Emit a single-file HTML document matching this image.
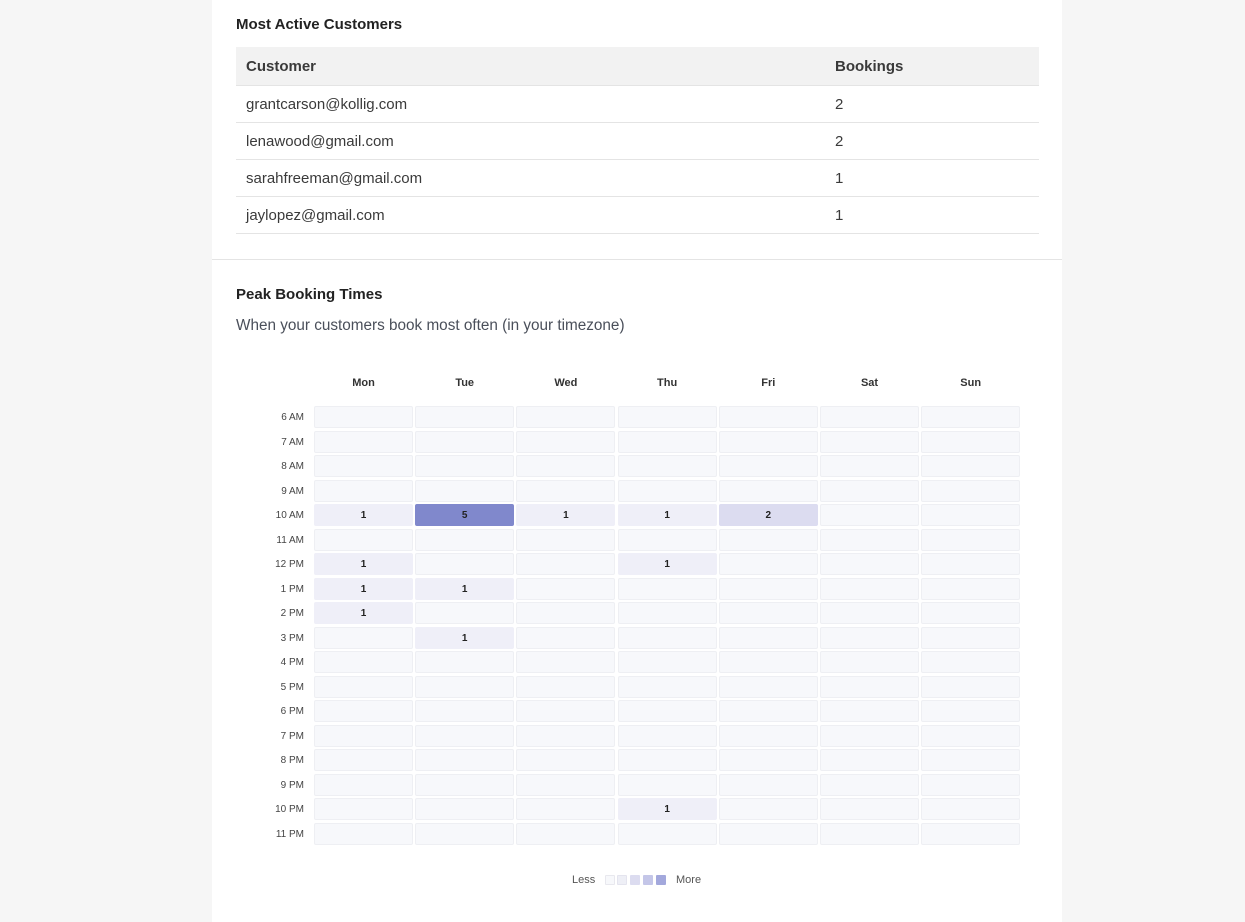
<!DOCTYPE html>
<html><head><style>
body{margin:0;background:#f6f6f6;font-family:"Liberation Sans",sans-serif;color:#333}
.card{position:absolute;left:212px;top:0;width:850px;height:922px;background:#fff}
h3{position:absolute;left:24px;margin:0;font-size:15px;font-weight:bold;color:#222}
table{position:absolute;left:24px;top:47px;width:803px;border-collapse:collapse;font-size:15px}
th{background:#f2f2f2;text-align:left;font-weight:bold;height:38px;padding:0 10px;color:#3a3a3a;border-bottom:1px solid #e4e4e4}
td{height:36px;padding:0 10px;border-bottom:1px solid #e4e4e4;color:#3a3a3a}
.div{position:absolute;left:0;top:259px;width:850px;height:1px;background:#e4e4e4}
.sub{position:absolute;left:24px;top:317px;font-size:15.3px;color:#4a4f5a}
.day{position:absolute;top:377px;font-size:11px;font-weight:bold;color:#333;width:99px;text-align:center}
.lbl{position:absolute;left:40px;width:52px;text-align:right;font-size:10px;color:#444}
.c{position:absolute;width:97px;height:20px;background:#f7f8fb;border:1px solid #eeeff3;border-radius:2px;font-size:10px;font-weight:bold;text-align:center;line-height:21px;color:#222}
.v1{background:#efeff8;border-color:#efeff8}
.v2{background:#dcdcf0;border-color:#dcdcf0}
.v5{background:#8088cc;border-color:#8088cc}
.lg{position:absolute;top:875px;width:10px;height:10px;border-radius:1px}
</style></head><body>
<div class="card">
<h3 style="top:16px">Most Active Customers</h3>
<table>
<tr><th style="width:569px">Customer</th><th>Bookings</th></tr>
<tr><td>grantcarson@kollig.com</td><td>2</td></tr>
<tr><td>lenawood@gmail.com</td><td>2</td></tr>
<tr><td>sarahfreeman@gmail.com</td><td>1</td></tr>
<tr><td>jaylopez@gmail.com</td><td>1</td></tr>
</table>
<div class="div"></div>
<h3 style="top:286px">Peak Booking Times</h3>
<div class="sub">When your customers book most often (in your timezone)</div>
<div id="g"></div>
<div style="position:absolute;left:360px;top:874px;font-size:11px;color:#555">Less</div>
<div class="lg" style="left:393px;background:#f7f8fb;border:1px solid #e8e8ee;width:8px;height:8px"></div>
<div class="lg" style="left:405px;background:#eeeff6;border:1px solid #e4e4ee;width:8px;height:8px"></div>
<div class="lg" style="left:418px;background:#dcdcf0"></div>
<div class="lg" style="left:431px;background:#c4c6e8"></div>
<div class="lg" style="left:444px;background:#a3a8dc"></div>
<div style="position:absolute;left:464px;top:874px;font-size:11px;color:#555">More</div>
</div>
<script>
var days=["Mon","Tue","Wed","Thu","Fri","Sat","Sun"],hours=["6 AM","7 AM","8 AM","9 AM","10 AM","11 AM","12 PM","1 PM","2 PM","3 PM","4 PM","5 PM","6 PM","7 PM","8 PM","9 PM","10 PM","11 PM"];
var vals={"4,0":1,"4,1":5,"4,2":1,"4,3":1,"4,4":2,"6,0":1,"6,3":1,"7,0":1,"7,1":1,"8,0":1,"9,1":1,"16,3":1};
var h="";
days.forEach(function(d,j){h+='<div class="day" style="left:'+(102+j*101.2)+'px">'+d+'</div>';});
hours.forEach(function(t,i){var y=406+i*24.53;
h+='<div class="lbl" style="top:'+(y+6)+'px">'+t+'</div>';
for(var j=0;j<7;j++){var v=vals[i+","+j];h+='<div class="c'+(v?' v'+v:'')+'" style="left:'+(102+j*101.2)+'px;top:'+y+'px">'+(v||'')+'</div>';}});
document.getElementById("g").innerHTML=h;
</script>
</body></html>
